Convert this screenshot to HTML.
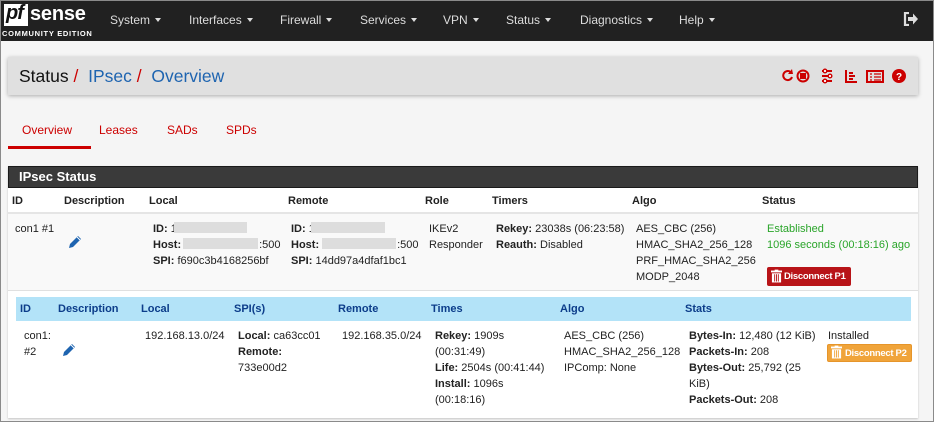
<!DOCTYPE html>
<html><head><meta charset="utf-8"><style>
*{margin:0;padding:0;box-sizing:border-box}
body{width:934px;height:422px;overflow:hidden;background:#f5f5f5;font-family:"Liberation Sans",sans-serif;font-size:11px;color:#222;position:relative}
.a{position:absolute;white-space:nowrap}
.frame{position:absolute;left:0;top:0;width:934px;height:422px;border:1px solid #8a8a8a;pointer-events:none}
.nav{position:absolute;left:0;top:0;width:934px;height:41px;background:#212121}
.nav .m{position:absolute;top:13px;color:#ddd;font-size:12px}
.car{display:inline-block;width:0;height:0;border-left:3.5px solid transparent;border-right:3.5px solid transparent;border-top:4px solid #ddd;margin-left:5px;vertical-align:2px}
b{font-weight:bold}
.blur{position:absolute;background:#ddd;height:11px}
.lnk{color:#1e64b0}
</style></head><body>
<div class="nav">
 <div class="a" style="left:4px;top:4px;width:24px;height:22px;background:#fff"></div>
 <div class="a" style="left:6px;top:2px;font:italic bold 20px 'Liberation Sans',sans-serif;color:#111;letter-spacing:-1px">pf</div>
 <div class="a" style="left:30px;top:3px;font:bold 20px 'Liberation Sans',sans-serif;color:#fff;letter-spacing:-0.2px">sense</div>
 <div class="a" style="left:2px;top:29px;font:bold 7.5px 'Liberation Sans',sans-serif;color:#fff;letter-spacing:0.7px">COMMUNITY EDITION</div>
 <div class="m" style="left:110px">System<span class="car"></span></div>
 <div class="m" style="left:189px">Interfaces<span class="car"></span></div>
 <div class="m" style="left:280px">Firewall<span class="car"></span></div>
 <div class="m" style="left:360px">Services<span class="car"></span></div>
 <div class="m" style="left:443px">VPN<span class="car"></span></div>
 <div class="m" style="left:506px">Status<span class="car"></span></div>
 <div class="m" style="left:580px">Diagnostics<span class="car"></span></div>
 <div class="m" style="left:679px">Help<span class="car"></span></div>
 <svg class="a" style="left:903px;top:12px" width="16" height="14" viewBox="0 0 16 14"><path d="M6 1H2v12h4" stroke="#ddd" stroke-width="2.2" fill="none"/><path d="M5 5h5V1.5L15 7l-5 5.5V9H5z" fill="#ddd"/></svg>
</div>
<div class="a" style="left:8px;top:57px;width:910px;height:38px;background:#e0e0e0;box-shadow:0 1px 4px rgba(0,0,0,.3)"></div>
<div class="a" style="left:19px;top:66px;font-size:17.5px;color:#111">Status <span style="color:#c00">/</span>&nbsp; <span class="lnk">IPsec</span> <span style="color:#c00">/</span>&nbsp; <span class="lnk">Overview</span></div>
<svg class="a" style="left:782px;top:68px" width="128" height="16" viewBox="0 0 128 16">
 <g fill="none" stroke="#c00" stroke-width="2"><path d="M10 9a4.5 4.5 0 1 1-1.5-5"/><circle cx="21" cy="8" r="5.5"/><path d="M40 3h10M40 8h10M40 13h10"/><path d="M64 2v12h11M67 5h4M67 8h6M67 11h4"/><rect x="85" y="3" width="16" height="11"/></g>
 <path d="M10 1l1 5-5 0z" fill="#c00"/><rect x="18" y="5" width="6" height="6" fill="#c00"/>
 <circle cx="43" cy="3" r="1.8" fill="#fff" stroke="#c00" stroke-width="1.4"/><circle cx="48" cy="8" r="1.8" fill="#fff" stroke="#c00" stroke-width="1.4"/><circle cx="43" cy="13" r="1.8" fill="#fff" stroke="#c00" stroke-width="1.4"/>
 <path d="M88 6h2M88 9h2M88 12h2M92 6h7M92 9h7M92 12h7" stroke="#c00" stroke-width="1.3"/>
 <circle cx="117" cy="8" r="7" fill="#c00"/><text x="117" y="12" font-size="10" font-weight="bold" fill="#fff" text-anchor="middle" font-family="Liberation Sans">?</text>
</svg>
<div class="a" style="left:22px;top:123px;color:#c00;font-size:12px">Overview</div>
<div class="a" style="left:8px;top:146px;width:83px;height:3px;background:#c00"></div>
<div class="a" style="left:99px;top:123px;color:#c00;font-size:12px">Leases</div>
<div class="a" style="left:167px;top:123px;color:#c00;font-size:12px">SADs</div>
<div class="a" style="left:226px;top:123px;color:#c00;font-size:12px">SPDs</div>

<div class="a" style="left:8px;top:166px;width:910px;height:252px;background:#fff;box-shadow:0 1px 2px rgba(0,0,0,.2)"></div>
<div class="a" style="left:8px;top:166px;width:910px;height:22px;background:#3a3a3a;border:1px solid #1a1a1a"></div>
<div class="a" style="left:19px;top:169px;color:#fff;font-weight:bold;font-size:13px">IPsec Status</div>
<div class="a" style="left:8px;top:212px;width:910px;height:2px;background:#e5e5e5"></div>
<div class="a" style="left:8px;top:214px;width:910px;height:76px;background:#f9f9f9"></div>
<div class="a" style="left:8px;top:290px;width:910px;height:1px;background:#e0e0e0"></div>
<div class="a" style="top:195px;left:12px"><b>ID</b></div>
<div class="a" style="top:195px;left:64px"><b>Description</b></div>
<div class="a" style="top:195px;left:149px"><b>Local</b></div>
<div class="a" style="top:195px;left:288px"><b>Remote</b></div>
<div class="a" style="top:195px;left:425px"><b>Role</b></div>
<div class="a" style="top:195px;left:492px"><b>Timers</b></div>
<div class="a" style="top:195px;left:632px"><b>Algo</b></div>
<div class="a" style="top:195px;left:762px"><b>Status</b></div>

<div class="a" style="top:221px;left:15px;line-height:16px">con1 #1</div>
<svg class="a" style="left:68px;top:235px" width="14" height="14" viewBox="0 0 14 14"><path d="M1 13l1-4 8-8 3 3-8 8z" fill="#1e64b0"/><path d="M9 2l3 3" stroke="#fff" stroke-width="1"/></svg>
<div class="a" style="top:221px;left:153px;line-height:16px"><b>ID:</b> 1<br><b>Host:</b><span style="display:inline-block;width:78px"></span>:500<br><b>SPI:</b> f690c3b4168256bf</div>
<div class="blur" style="left:174px;top:222px;width:73px"></div>
<div class="blur" style="left:183px;top:238px;width:75px"></div>
<div class="a" style="top:221px;left:291px;line-height:16px"><b>ID:</b> 1<br><b>Host:</b><span style="display:inline-block;width:78px"></span>:500<br><b>SPI:</b> 14dd97a4dfaf1bc1</div>
<div class="blur" style="left:311px;top:222px;width:74px"></div>
<div class="blur" style="left:322px;top:238px;width:74px"></div>
<div class="a" style="top:221px;left:429px;line-height:16px">IKEv2<br>Responder</div>
<div class="a" style="top:221px;left:496px;line-height:16px"><b>Rekey:</b> 23038s (06:23:58)<br><b>Reauth:</b> Disabled</div>
<div class="a" style="top:221px;left:636px;line-height:16px">AES_CBC (256)<br>HMAC_SHA2_256_128<br>PRF_HMAC_SHA2_256<br>MODP_2048</div>
<div class="a" style="top:221px;left:767px;line-height:16px;color:#2aa52a">Established<br>1096 seconds (00:18:16) ago</div>
<div class="a" style="left:767px;top:267px;width:84px;height:19px;background:#b81418;border-radius:2px;color:#fff;font-weight:bold;font-size:9.5px;padding:4px 0 0 17px;letter-spacing:-0.3px">Disconnect P1</div>
<svg class="a" style="left:771px;top:269px" width="11" height="15" viewBox="0 0 12 15"><rect x="0" y="1" width="12" height="2" fill="#fff"/><rect x="4" y="0" width="4" height="2" fill="#fff"/><path d="M1 4h10v10H1z" fill="#fff"/><path d="M4 5v8M6 5v8M8 5v8" stroke="#b81418" stroke-width="1"/></svg>

<div class="a" style="left:16px;top:297px;width:895px;height:24px;background:#b3e3f8"></div>
<div class="a" style="top:303px;left:20px;color:#0c3d8a"><b>ID</b></div>
<div class="a" style="top:303px;left:58px;color:#0c3d8a"><b>Description</b></div>
<div class="a" style="top:303px;left:141px;color:#0c3d8a"><b>Local</b></div>
<div class="a" style="top:303px;left:234px;color:#0c3d8a"><b>SPI(s)</b></div>
<div class="a" style="top:303px;left:338px;color:#0c3d8a"><b>Remote</b></div>
<div class="a" style="top:303px;left:431px;color:#0c3d8a"><b>Times</b></div>
<div class="a" style="top:303px;left:560px;color:#0c3d8a"><b>Algo</b></div>
<div class="a" style="top:303px;left:685px;color:#0c3d8a"><b>Stats</b></div>
<div class="a" style="top:328px;left:24px;line-height:16px">con1:<br>#2</div>
<svg class="a" style="left:62px;top:343px" width="14" height="14" viewBox="0 0 14 14"><path d="M1 13l1-4 8-8 3 3-8 8z" fill="#1e64b0"/><path d="M9 2l3 3" stroke="#fff" stroke-width="1"/></svg>
<div class="a" style="top:328px;left:145px;line-height:16px">192.168.13.0/24</div>
<div class="a" style="top:328px;left:238px;line-height:16px"><b>Local:</b> ca63cc01<br><b>Remote:</b><br>733e00d2</div>
<div class="a" style="top:328px;left:342px;line-height:16px">192.168.35.0/24</div>
<div class="a" style="top:328px;left:435px;line-height:16px"><b>Rekey:</b> 1909s<br>(00:31:49)<br><b>Life:</b> 2504s (00:41:44)<br><b>Install:</b> 1096s<br>(00:18:16)</div>
<div class="a" style="top:328px;left:564px;line-height:16px">AES_CBC (256)<br>HMAC_SHA2_256_128<br>IPComp: None</div>
<div class="a" style="top:328px;left:689px;line-height:16px"><b>Bytes-In:</b> 12,480 (12 KiB)<br><b>Packets-In:</b> 208<br><b>Bytes-Out:</b> 25,792 (25<br>KiB)<br><b>Packets-Out:</b> 208</div>
<div class="a" style="top:328px;left:828px;line-height:16px">Installed</div>
<div class="a" style="left:827px;top:344px;width:85px;height:18px;background:#f0a43a;border:1px solid #e6952a;border-radius:2px;color:#fff;font-weight:bold;font-size:9.5px;padding:3px 0 0 17px;letter-spacing:-0.3px">Disconnect P2</div>
<svg class="a" style="left:831px;top:345px" width="11" height="15" viewBox="0 0 12 15"><rect x="0" y="1" width="12" height="2" fill="#fff"/><rect x="4" y="0" width="4" height="2" fill="#fff"/><path d="M1 4h10v10H1z" fill="#fff"/><path d="M4 5v8M6 5v8M8 5v8" stroke="#f0a43a" stroke-width="1"/></svg>
<div class="frame"></div>
</body></html>
